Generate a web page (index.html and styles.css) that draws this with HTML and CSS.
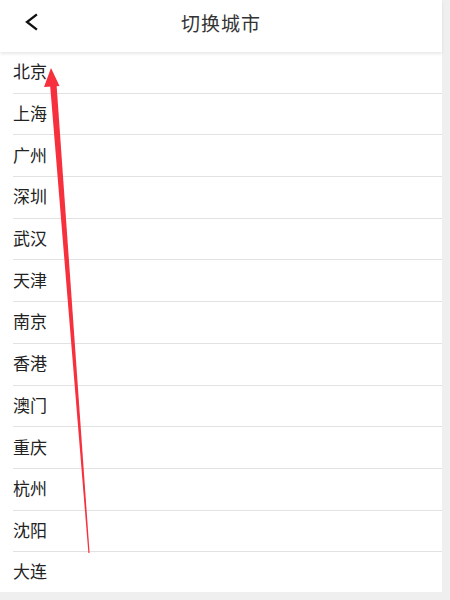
FILE: index.html
```html
<!DOCTYPE html>
<html lang="zh-CN">
<head>
<meta charset="utf-8">
<title>切换城市</title>
<link rel="stylesheet" href="styles.css">
</head>
<body>
<div class="page">
  <header class="topbar">
    <svg class="back" width="14" height="18" viewBox="0 0 14 18"><polyline points="11,2 2,9 11,16" fill="none" stroke="#111" stroke-width="2.3" stroke-linecap="square" stroke-linejoin="miter"/></svg>
    <h1 class="title">切换城市</h1>
  </header>
  <ul class="cities">
    <li class="city">北京</li>
    <li class="city">上海</li>
    <li class="city">广州</li>
    <li class="city">深圳</li>
    <li class="city">武汉</li>
    <li class="city">天津</li>
    <li class="city">南京</li>
    <li class="city">香港</li>
    <li class="city">澳门</li>
    <li class="city">重庆</li>
    <li class="city">杭州</li>
    <li class="city">沈阳</li>
    <li class="city">大连</li>
  </ul>
</div>
<svg class="annot" width="450" height="600" viewBox="0 0 450 600">
  <polygon points="50,84 56.5,84 89.6,553 88.4,553" fill="#f7303e"/>
  <polygon points="51,68 44,87 59.5,86" fill="#f7303e"/>
</svg>
</body>
</html>
```
FILE: styles.css
```css
html, body {
  margin: 0;
  padding: 0;
}
body {
  background: #efefef;
  width: 450px;
  height: 600px;
  overflow: hidden;
  position: relative;
  font-family: "Noto Sans CJK SC", "Noto Sans", sans-serif;
}
.page {
  width: 442px;
  background: #fff;
}
.topbar {
  height: 52px;
  display: flex;
  align-items: center;
  justify-content: center;
  position: relative;
  background: #fff;
  box-shadow: 0 2px 3px rgba(0, 0, 0, 0.09);
  z-index: 1;
}
.back {
  position: absolute;
  left: 25px;
  top: 13px;
}
.title {
  margin: 0 0 7px 0;
  font-size: 19px;
  font-weight: normal;
  color: #333;
  letter-spacing: 1px;
}
.cities {
  list-style: none;
  margin: 0;
  padding: 0;
}
.city {
  box-sizing: border-box;
  height: 41.7px;
  margin-left: 13px;
  padding-bottom: 3px;
  border-bottom: 1px solid #e2e2e2;
  display: flex;
  align-items: center;
  font-size: 17px;
  color: #222;
}
.city:last-child {
  border-bottom: none;
  height: 40px;
}
.annot {
  position: absolute;
  left: 0;
  top: 0;
  pointer-events: none;
}
```
